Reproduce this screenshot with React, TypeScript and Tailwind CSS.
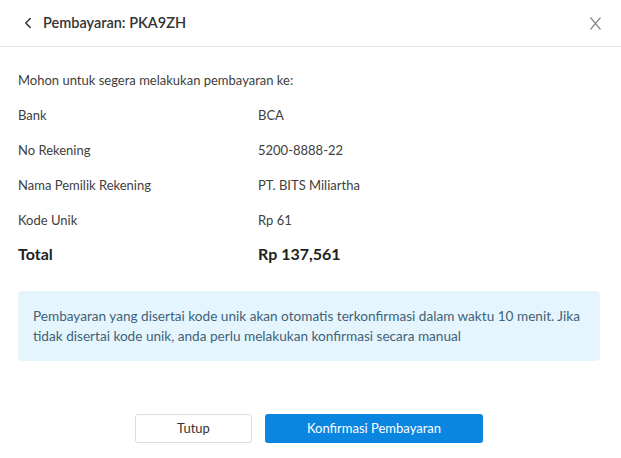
import { ChevronLeft } from "lucide-react";

const rows = [
  { label: "Bank", value: "BCA" },
  { label: "No Rekening", value: "5200-8888-22" },
  { label: "Nama Pemilik Rekening", value: "PT. BITS Miliartha" },
  { label: "Kode Unik", value: "Rp 61" },
];

export default function App() {
  return (
    <div className="w-[621px] h-[458px] bg-white font-['Lato',sans-serif] text-[#404040]">
      {/* Header */}
      <div className="h-[47px] flex items-center justify-between border-b border-[#e3e3e3] pl-[19px] pr-[20px]">
        <div className="flex items-center gap-[6px]">
          <ChevronLeft className="w-[18px] h-[18px] text-[#333]" strokeWidth={2} />
          <span className="text-[14.5px] font-semibold text-[#333]">Pembayaran: PKA9ZH</span>
        </div>
        <svg width="11" height="13" viewBox="0 0 11 13" className="text-[#8a8a8a]">
          <path d="M0.5 0.5 L10.5 12.5 M10.5 0.5 L0.5 12.5" stroke="currentColor" strokeWidth="1.2" fill="none" />
        </svg>
      </div>

      {/* Body */}
      <div className="pl-[18px] pr-[21px] pt-[24px]">
        <p className="text-[13px] leading-[18px] mb-[17px]">Mohon untuk segera melakukan pembayaran ke:</p>
        <div className="flex flex-col gap-[17px]">
          {rows.map((r) => (
            <div key={r.label} className="flex text-[13px] leading-[18px]">
              <span className="w-[240px]">{r.label}</span>
              <span>{r.value}</span>
            </div>
          ))}
          <div className="flex text-[16px] leading-[16px] font-bold text-[#222]">
            <span className="w-[240px]">Total</span>
            <span>Rp 137,561</span>
          </div>
        </div>

        <div className="mt-[29px] bg-[#e5f5fd] rounded-[4px] px-[15px] py-[15px] text-[13.6px] leading-[20px] text-[#3f6279]">
          Pembayaran yang disertai kode unik akan otomatis terkonfirmasi dalam waktu 10 menit. Jika
          tidak disertai kode unik, anda perlu melakukan konfirmasi secara manual
        </div>

        <div className="mt-[53px] flex justify-center gap-[13px]">
          <button className="w-[117px] h-[29px] rounded-[3px] border border-[#dcdcdc] bg-white text-[13px] text-[#333]">
            Tutup
          </button>
          <button className="w-[218px] h-[29px] rounded-[3px] bg-[#0a85e0] text-[13px] text-white">
            Konfirmasi Pembayaran
          </button>
        </div>
      </div>
    </div>
  );
}
